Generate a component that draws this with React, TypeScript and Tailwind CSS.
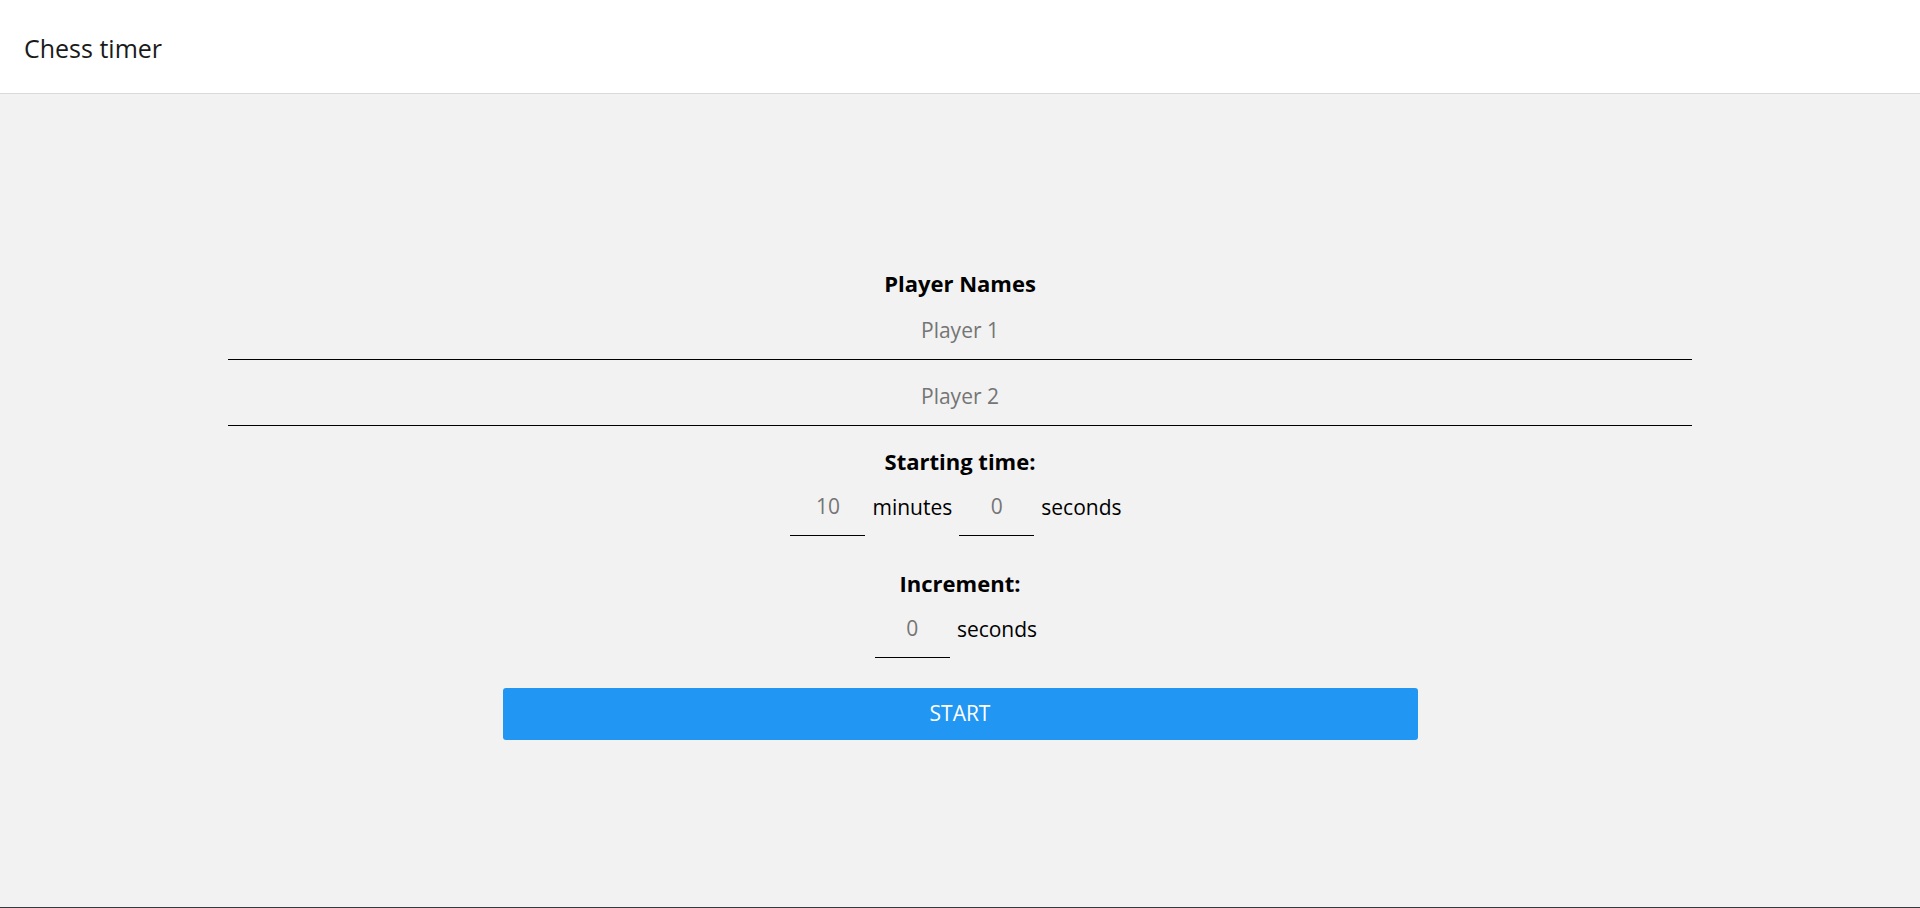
import { useState } from "react";

const font = { fontFamily: '"Open Sans", "Noto Sans", Arial, sans-serif' };

function LineInput({
  value,
  placeholder,
  onChange,
  className,
}: {
  value: string;
  placeholder: string;
  onChange: (v: string) => void;
  className: string;
}) {
  return (
    <input
      value={value}
      placeholder={placeholder}
      onChange={(e) => onChange(e.target.value)}
      className={`${className} bg-transparent border-0 border-b border-black pt-[10px] pb-[15px] text-center text-[21px] leading-[28px] text-black placeholder:text-[#757575] outline-none`}
    />
  );
}

export default function App() {
  const [p1, setP1] = useState("");
  const [p2, setP2] = useState("");
  const [minutes, setMinutes] = useState("");
  const [seconds, setSeconds] = useState("");
  const [increment, setIncrement] = useState("");

  return (
    <div className="flex h-screen flex-col text-black" style={font}>
      {/* Top bar */}
      <header className="flex h-[94px] shrink-0 items-center border-b border-[#dadada] bg-white pl-[24px] pt-[3px]">
        <h1 className="text-[25px] leading-[32px] text-[#1a1a1a]">Chess timer</h1>
      </header>

      {/* Setup form */}
      <main className="flex flex-1 flex-col items-center justify-center border-b border-[#333a40] bg-[#f2f2f2] pt-[7px]">
        <h2 className="text-[22px] font-bold leading-[28px]">Player Names</h2>
        <LineInput value={p1} placeholder="Player 1" onChange={setP1} className="mt-[9px] w-[1464px]" />
        <LineInput value={p2} placeholder="Player 2" onChange={setP2} className="mt-[12px] w-[1464px]" />

        <h2 className="mt-[21px] text-[22px] font-bold leading-[28px]">Starting time:</h2>
        <div className="mt-[7px] flex items-center gap-[7px] pr-[8px] text-[21px] leading-[28px]">
          <LineInput value={minutes} placeholder="10" onChange={setMinutes} className="w-[75px]" />
          <span className="-mt-[4px]">minutes</span>
          <LineInput value={seconds} placeholder="0" onChange={setSeconds} className="w-[75px]" />
          <span className="-mt-[4px]">seconds</span>
        </div>

        <h2 className="mt-[33px] text-[22px] font-bold leading-[28px]">Increment:</h2>
        <div className="mt-[7px] flex items-center gap-[7px] pr-[8px] text-[21px] leading-[28px]">
          <LineInput value={increment} placeholder="0" onChange={setIncrement} className="w-[75px]" />
          <span className="-mt-[4px]">seconds</span>
        </div>

        <button className="mt-[30px] h-[52px] w-[915px] rounded-[3px] bg-[#2196f3] text-[21px] uppercase text-white">
          Start
        </button>
      </main>
    </div>
  );
}
